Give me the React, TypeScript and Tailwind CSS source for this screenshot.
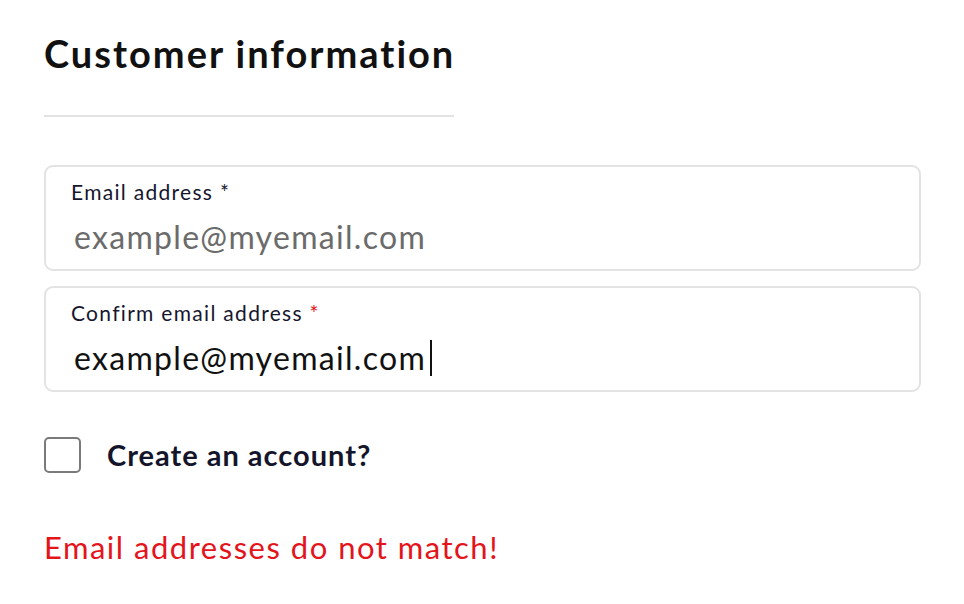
import * as React from 'react'

type FieldProps = {
  label: string
  required?: 'plain' | 'red'
  value?: string
  placeholder?: string
  focused?: boolean
}

function Field({ label, required, value, placeholder, focused }: FieldProps) {
  return (
    <div className="flex h-[106px] flex-col rounded-[9px] border-2 border-[#e3e3e3] bg-white pl-[25px] pt-[11px]">
      <div className="text-[21px] leading-[28px] tracking-[1.3px] text-[#16162e]">
        {label}
        {required === 'plain' && <span> *</span>}
        {required === 'red' && (
          <>
            {' '}
            <span className="text-[#e4141b]">*</span>
          </>
        )}
      </div>
      <div className="mt-[11px] flex items-center pl-[3px] text-[32px] leading-[40px] tracking-[1.3px]">
        {value ? (
          <>
            <span className="text-[#111]">{value}</span>
            {focused && <span className="ml-[4px] inline-block h-[36px] w-[2px] bg-[#111]" />}
          </>
        ) : (
          <span className="text-[#6b6b6b]">{placeholder}</span>
        )}
      </div>
    </div>
  )
}

function App() {
  return (
    <div
      className="min-h-[604px] w-[964px] bg-white pl-[44px] pr-[43px] pt-[31px] [font-variant-ligatures:none]"
      style={{ fontFamily: 'Lato, "Open Sans", sans-serif' }}
    >
      <h1 className="text-[38px] font-bold leading-[44px] tracking-[2px] text-[#111]">Customer information</h1>
      <div className="mt-[40px] h-[2px] w-[410px] bg-[#e3e3e3]" />

      <div className="mt-[48px] flex flex-col gap-[15px]">
        <Field label="Email address" required="plain" placeholder="example@myemail.com" />
        <Field label="Confirm email address" required="red" value="example@myemail.com" focused />
      </div>

      <label className="mt-[45px] flex items-center">
        <span className="inline-block h-[36px] w-[37px] rounded-[5px] border-2 border-[#7a7a7a] bg-white" />
        <span className="ml-[26px] text-[29px] font-bold leading-[36px] tracking-[1px] text-[#14142b]">
          Create an account?
        </span>
      </label>

      <p className="mt-[56px] text-[31px] leading-[36px] tracking-[1.5px] text-[#e4141b]">
        Email addresses do not match!
      </p>
    </div>
  )
}

export default App
